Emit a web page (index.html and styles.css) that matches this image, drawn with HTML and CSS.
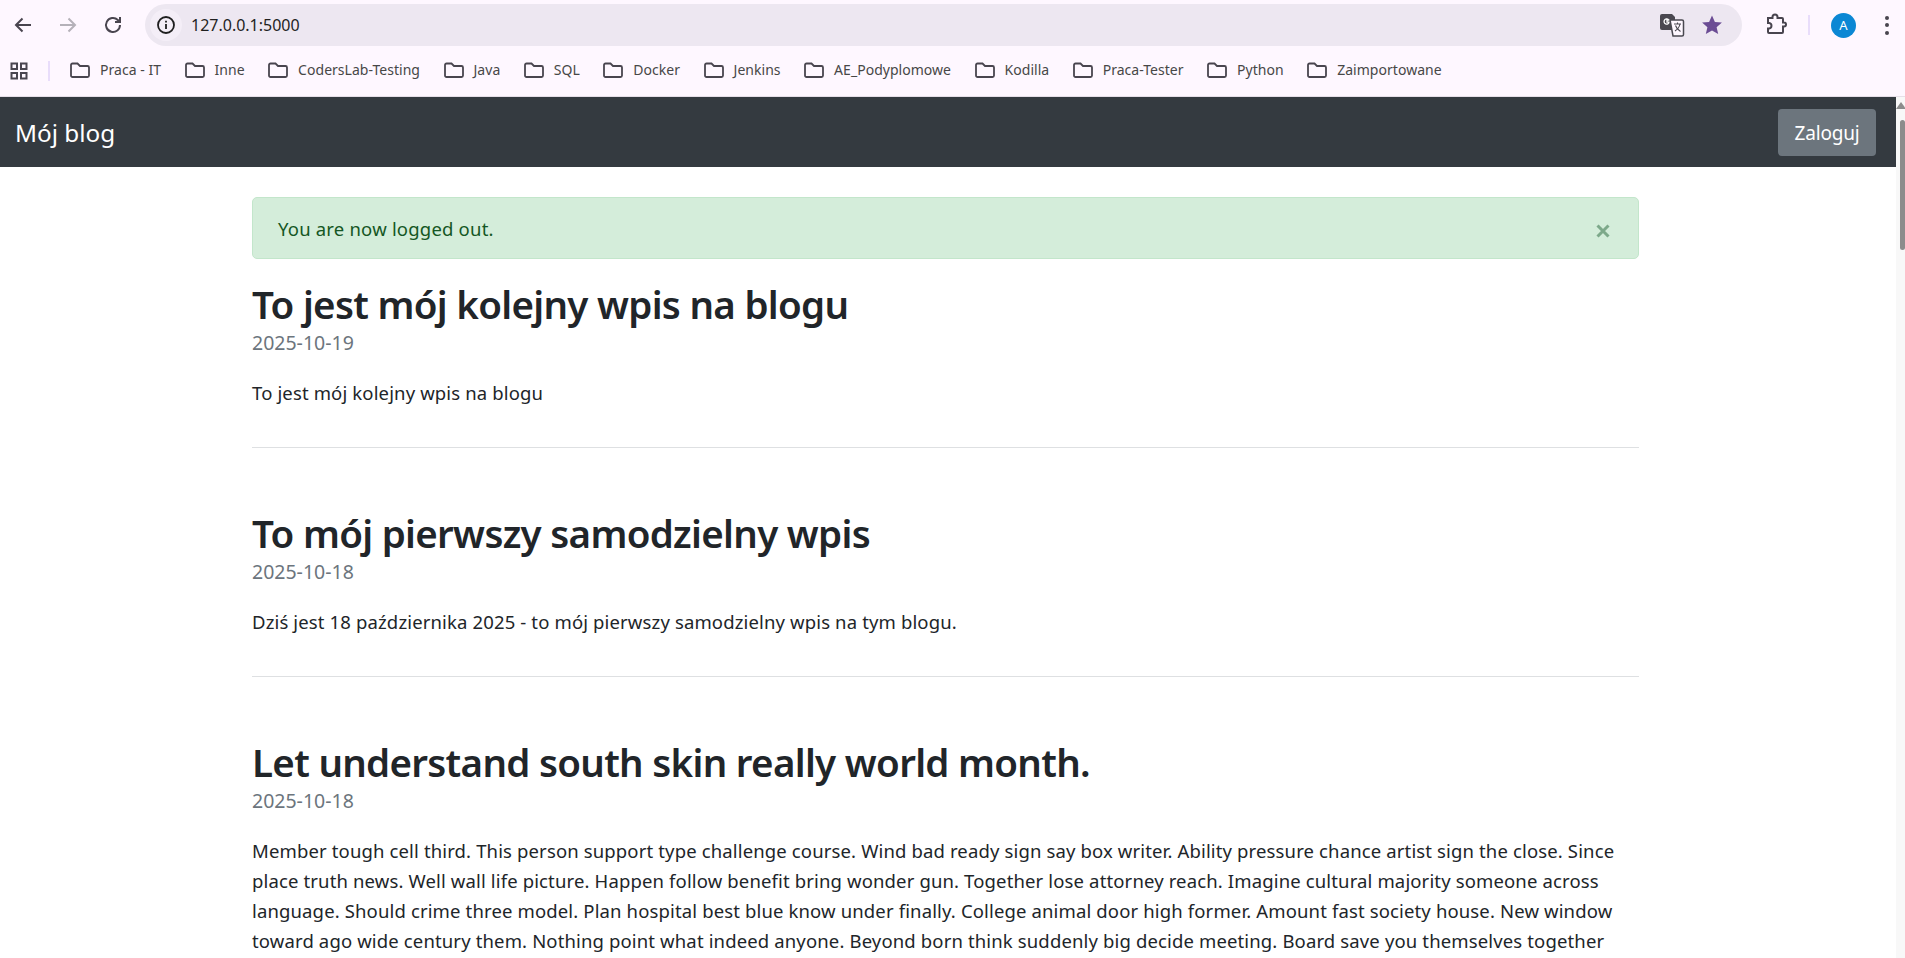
FILE: index.html
```html
<!DOCTYPE html>
<html lang="pl">
<head>
<meta charset="utf-8">
<title>Mój blog</title>
<link rel="stylesheet" href="styles.css">
</head>
<body>
<header class="chrome">
  <div class="toolbar">
    <button class="nav-btn"><svg width="24" height="24" viewBox="0 0 24 24"><path d="M20 12H5M11.5 5.5 5 12l6.5 6.5" class="ico"/></svg></button>
    <button class="nav-btn dim"><svg width="24" height="24" viewBox="0 0 24 24"><path d="M4 12h15M12.5 5.5 19 12l-6.5 6.5" class="ico"/></svg></button>
    <button class="nav-btn"><svg width="24" height="24" viewBox="0 0 24 24"><path d="M19 12a7 7 0 1 1-2.2-5.1L19 9M19 4v5h-5" class="ico"/></svg></button>
    <div class="omnibox">
      <span class="site-info"><svg width="20" height="20" viewBox="0 0 20 20"><circle cx="10" cy="10" r="8" class="ico-dark"/><path d="M10 9v5M10 5.8v1.6" class="ico-dark"/></svg></span>
      <span class="url">127.0.0.1:5000</span>
      <span class="omni-icons">
        <svg width="26" height="24" viewBox="0 0 26 24"><path d="M3 1h10l3 3v13H3a2 2 0 0 1-2-2V3a2 2 0 0 1 2-2z" fill="#4a4850"/><path d="M11 7H8v2.2h2.2a2.6 2.6 0 1 1-.8-2.6" fill="none" stroke="#fff" stroke-width="1.3"/><path d="M11 7h12a1.5 1.5 0 0 1 1.5 1.5v13a1.5 1.5 0 0 1-1.5 1.5H14z" fill="#fef7ff" stroke="#4a4850" stroke-width="1.5"/><path d="M15 11h7M18.500 9.500v1.500M21 11c-.6 3-2.800 5.500-5 7M16.500 12.500c.8 2.500 3 4.800 5 6" fill="none" stroke="#4a4850" stroke-width="1.1"/></svg>
        <svg width="22" height="22" viewBox="0 0 22 22"><path d="m11 1.500 2.900 6.400 7 .7-5.300 4.600 1.600 6.800L11 16.400l-6.200 3.600 1.600-6.800L1.100 8.600l7-.7z" fill="#6b4c94"/></svg>
      </span>
    </div>
    <span class="ext"><svg width="24" height="24" viewBox="0 0 24 24"><path d="M4 6h4.500V5a2.500 2.500 0 0 1 5 0v1H18a1 1 0 0 1 1 1v3.500h1a2 2 0 0 1 0 4h-1V20a1 1 0 0 1-1 1H5a1 1 0 0 1-1-1v-3.500h1.200a2.800 2.800 0 0 0 0-5.500H4V7z" class="ico" transform="translate(0 -1)"/></svg></span>
    <span class="divider"></span>
    <span class="avatar">A</span>
    <span class="menu"><i></i><i></i><i></i></span>
  </div>
  <nav class="bookmarks">
    <svg class="apps" width="20" height="20" viewBox="0 0 20 20"><path d="M2.500 2.500h5.500v5.500H2.500zM12 2.500h5.500v5.500H12zM2.500 12h5.500v5.500H2.500zM12 12h5.500v5.500H12z" class="ico-grid"/></svg>
    <span class="divider short"></span>
    <div class="bm-list">
      <a class="bm"><svg class="folder" viewBox="0 0 20 16"><path d="M1 3a1.500 1.500 0 0 1 1.500-1.500h5L10 4h7.500A1.500 1.500 0 0 1 19 5.500v8a1.500 1.500 0 0 1-1.500 1.500h-15A1.500 1.500 0 0 1 1 13.500z"/></svg>Praca - IT</a>
      <a class="bm"><svg class="folder" viewBox="0 0 20 16"><path d="M1 3a1.500 1.500 0 0 1 1.500-1.500h5L10 4h7.500A1.500 1.500 0 0 1 19 5.500v8a1.500 1.500 0 0 1-1.500 1.500h-15A1.500 1.500 0 0 1 1 13.500z"/></svg>Inne</a>
      <a class="bm"><svg class="folder" viewBox="0 0 20 16"><path d="M1 3a1.500 1.500 0 0 1 1.500-1.500h5L10 4h7.500A1.500 1.500 0 0 1 19 5.500v8a1.500 1.500 0 0 1-1.500 1.500h-15A1.500 1.500 0 0 1 1 13.500z"/></svg>CodersLab-Testing</a>
      <a class="bm"><svg class="folder" viewBox="0 0 20 16"><path d="M1 3a1.500 1.500 0 0 1 1.500-1.500h5L10 4h7.500A1.500 1.500 0 0 1 19 5.500v8a1.500 1.500 0 0 1-1.500 1.500h-15A1.500 1.500 0 0 1 1 13.500z"/></svg>Java</a>
      <a class="bm"><svg class="folder" viewBox="0 0 20 16"><path d="M1 3a1.500 1.500 0 0 1 1.500-1.500h5L10 4h7.500A1.500 1.500 0 0 1 19 5.500v8a1.500 1.500 0 0 1-1.500 1.500h-15A1.500 1.500 0 0 1 1 13.500z"/></svg>SQL</a>
      <a class="bm"><svg class="folder" viewBox="0 0 20 16"><path d="M1 3a1.500 1.500 0 0 1 1.500-1.500h5L10 4h7.500A1.500 1.500 0 0 1 19 5.500v8a1.500 1.500 0 0 1-1.500 1.500h-15A1.500 1.500 0 0 1 1 13.500z"/></svg>Docker</a>
      <a class="bm"><svg class="folder" viewBox="0 0 20 16"><path d="M1 3a1.500 1.500 0 0 1 1.500-1.500h5L10 4h7.500A1.500 1.500 0 0 1 19 5.500v8a1.500 1.500 0 0 1-1.500 1.500h-15A1.500 1.500 0 0 1 1 13.500z"/></svg>Jenkins</a>
      <a class="bm"><svg class="folder" viewBox="0 0 20 16"><path d="M1 3a1.500 1.500 0 0 1 1.500-1.500h5L10 4h7.500A1.500 1.500 0 0 1 19 5.500v8a1.500 1.500 0 0 1-1.500 1.500h-15A1.500 1.500 0 0 1 1 13.500z"/></svg>AE_Podyplomowe</a>
      <a class="bm"><svg class="folder" viewBox="0 0 20 16"><path d="M1 3a1.500 1.500 0 0 1 1.500-1.500h5L10 4h7.500A1.500 1.500 0 0 1 19 5.500v8a1.500 1.500 0 0 1-1.500 1.500h-15A1.500 1.500 0 0 1 1 13.500z"/></svg>Kodilla</a>
      <a class="bm"><svg class="folder" viewBox="0 0 20 16"><path d="M1 3a1.500 1.500 0 0 1 1.500-1.500h5L10 4h7.500A1.500 1.500 0 0 1 19 5.500v8a1.500 1.500 0 0 1-1.500 1.500h-15A1.500 1.500 0 0 1 1 13.500z"/></svg>Praca-Tester</a>
      <a class="bm"><svg class="folder" viewBox="0 0 20 16"><path d="M1 3a1.500 1.500 0 0 1 1.500-1.500h5L10 4h7.500A1.500 1.500 0 0 1 19 5.500v8a1.500 1.500 0 0 1-1.500 1.500h-15A1.500 1.500 0 0 1 1 13.500z"/></svg>Python</a>
      <a class="bm"><svg class="folder" viewBox="0 0 20 16"><path d="M1 3a1.500 1.500 0 0 1 1.500-1.500h5L10 4h7.500A1.500 1.500 0 0 1 19 5.500v8a1.500 1.500 0 0 1-1.500 1.500h-15A1.500 1.500 0 0 1 1 13.500z"/></svg>Zaimportowane</a>
    </div>
  </nav>
</header>
<div class="viewport">
  <div class="page">
    <div class="navbar">
      <a class="brand">Mój blog</a>
      <a class="login">Zaloguj</a>
    </div>
    <main class="container">
      <div class="alert">
        <span class="alert-text">You are now logged out.</span>
        <svg class="close" width="14" height="14" viewBox="0 0 14 14"><path d="M1.500 1.500l11 11M12.500 1.500l-11 11"/></svg>
      </div>
      <article class="post">
        <h2>To jest mój kolejny wpis na blogu</h2>
        <div class="date">2025-10-19</div>
        <p>To jest mój kolejny wpis na blogu</p>
        <hr>
      </article>
      <article class="post">
        <h2>To mój pierwszy samodzielny wpis</h2>
        <div class="date">2025-10-18</div>
        <p>Dziś jest 18 października 2025 - to mój pierwszy samodzielny wpis na tym blogu.</p>
        <hr>
      </article>
      <article class="post">
        <h2>Let understand south skin really world month.</h2>
        <div class="date">2025-10-18</div>
        <p class="long">Member tough cell third. This person support type challenge course. Wind bad ready sign say box writer. Ability pressure chance artist sign the close. Since<br>place truth news. Well wall life picture. Happen follow benefit bring wonder gun. Together lose attorney reach. Imagine cultural majority someone across<br>language. Should crime three model. Plan hospital best blue know under finally. College animal door high former. Amount fast society house. New window<br>toward ago wide century them. Nothing point what indeed anyone. Beyond born think suddenly big decide meeting. Board save you themselves together</p>
      </article>
    </main>
  </div>
  <div class="scrollbar"><span class="arrow"></span><span class="thumb"></span></div>
</div>
</body>
</html>
```
FILE: styles.css
```css
* { box-sizing: border-box; }
html, body { margin: 0; height: 100%; overflow: hidden; background: #fff; }
body { font-family: "Noto Sans", sans-serif; color: #212529; display: flex; flex-direction: column; }

.chrome { background: #fef7ff; border-bottom: 1px solid #e6dfe8; height: 97px; flex: none; }
.toolbar { display: flex; align-items: center; height: 50px; padding-right: 16px; }
.toolbar > * { flex: none; }
.nav-btn { width: 45px; height: 42px; border: 0; background: none; padding: 0; display: flex; align-items: center; justify-content: center; }
.ico { fill: none; stroke: #49454f; stroke-width: 2; }
.dim .ico { stroke: #b5b1b9; }
.ico-dark { fill: none; stroke: #1f1f1f; stroke-width: 1.8; }
.ico-grid { fill: none; stroke: #49454f; stroke-width: 2; }
.omnibox { flex: 1 1 auto !important; margin-left: 10px; height: 42px; background: #ede7f1; border-radius: 21px; display: flex; align-items: center; padding-left: 5px; padding-right: 19px; }
.site-info { width: 32px; height: 32px; background: #f4eef7; border-radius: 50%; display: flex; align-items: center; justify-content: center; }
.url { margin-left: 9px; font-size: 16px; color: #1f1f1f; }
.omni-icons { margin-left: auto; display: flex; align-items: center; gap: 16px; }
.ext { margin-left: 22px; width: 24px; height: 24px; }
.divider { width: 2px; height: 20px; background: #e9ddfb; margin-left: 20px; }
.avatar { margin-left: 21px; width: 25px; height: 25px; border-radius: 50%; background: #0b87d4; color: #fff; font-size: 13px; display: flex; align-items: center; justify-content: center; }
.menu { margin-left: 29px; display: flex; flex-direction: column; gap: 3.500px; }
.menu i { width: 4px; height: 4px; border-radius: 50%; background: #49454f; }

.bookmarks { display: flex; align-items: center; height: 42px; padding-left: 9px; }
.divider.short { margin-left: 19px; }
.bm-list { display: flex; align-items: center; gap: 23.500px; margin-left: 20px; }
.bm { display: flex; align-items: center; gap: 10px; font-size: 14px; line-height: 18px; padding-bottom: 2px; color: #474747; white-space: nowrap; letter-spacing: .03px; }
.folder { width: 20px; height: 16px; fill: none; stroke: #49454f; stroke-width: 1.8; }

.viewport { flex: 1; position: relative; overflow: hidden; }
.page { height: 100%; overflow: hidden; padding-right: 9px; }
.navbar { height: 70px; background: #343a40; display: flex; align-items: center; justify-content: space-between; padding: 0 20px 0 15px; }
.brand { color: #fff; font-size: 24.300px; }
.login { width: 98px; height: 47px; background: #6c757d; color: #fff; border-radius: 4px; font-size: 19px; padding-top: 2px; display: flex; align-items: center; justify-content: center; letter-spacing: -.2px; }
.container { width: 1387px; margin: 30px 0 0 252px; }
.alert { height: 62px; background: #d4edda; border: 1px solid #c3e6cb; border-radius: 5px; color: #155724; font-size: 18.500px; padding: 0 24px 0 25px; display: flex; align-items: center; justify-content: space-between; margin-bottom: 21px; letter-spacing: .2px; }
.alert-text { padding-top: 1px; }
.close { margin: 5px 4px 0 0; }
.close path { fill: none; stroke: #7da98a; stroke-width: 3; }
.post { margin-bottom: 61px; }
.post h2 { margin: 0; font-size: 38.500px; line-height: 48px; font-weight: 600; letter-spacing: -.7px; }
.date { color: #6c757d; font-size: 19.500px; line-height: 30px; }
.post p { margin: 20px 0 0; font-size: 18.500px; line-height: 30px; letter-spacing: .14px; white-space: nowrap; }
.post hr { margin: 39px 0 0; border: 0; border-top: 1px solid #dee0e2; }

.scrollbar { position: absolute; top: 0; right: 0; bottom: 0; width: 9px; background: #f8f8f8; }
.arrow { position: absolute; top: 5px; left: 0; border-left: 5px solid transparent; border-right: 5px solid transparent; border-bottom: 7px solid #8c8c8c; }
.thumb { position: absolute; top: 23px; left: 4px; width: 5px; height: 130px; background: #8c8c8c; border-radius: 3px; }
```
